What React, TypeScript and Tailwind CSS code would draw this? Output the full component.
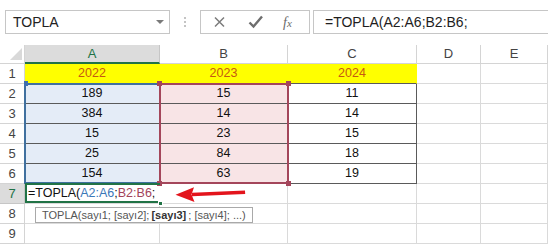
import React from "react";

const cols = ["A", "B", "C", "D", "E"];

const data = [
  ["189", "15", "11"],
  ["384", "14", "14"],
  ["15", "23", "15"],
  ["25", "84", "18"],
  ["154", "63", "19"],
];

function RowHead({ n, active }: { n: number; active?: boolean }) {
  return (
    <div
      className={
        active
          ? "flex items-center justify-center border-r border-b border-[#c6c6c6] bg-[#dcdcdc] text-[13px] text-[#217346]"
          : "flex items-center justify-center border-r border-b border-[#d4d4d4] bg-white text-[13px] text-[#444]"
      }
    >
      {n}
    </div>
  );
}

function Plain() {
  return <div className="border-r border-b border-[#dadada]" />;
}

export default function App() {
  return (
    <div className="w-[548px] h-[244px] overflow-hidden bg-white font-['Liberation_Sans',Arial,sans-serif]">
      {/* formula bar */}
      <div className="h-[45px] flex items-start pt-[10px] pl-[5px]">
        <div className="w-[165px] h-[24px] border border-[#c6c6c6] flex items-center justify-between pl-[7px] pr-[5px]">
          <span className="text-[14px] text-[#222]">TOPLA</span>
          <span className="w-0 h-0 border-l-[4px] border-r-[4px] border-t-[4px] border-l-transparent border-r-transparent border-t-[#7a7a7a]" />
        </div>
        <div className="w-[30px] h-[24px] flex flex-col items-center justify-center gap-[2px]">
          <span className="w-[2px] h-[2px] bg-[#c4c4c4]" />
          <span className="w-[2px] h-[2px] bg-[#c4c4c4]" />
          <span className="w-[2px] h-[2px] bg-[#c4c4c4]" />
        </div>
        <div className="w-[110px] h-[24px] border border-[#c6c6c6] flex items-center">
          <svg width="36" height="22" viewBox="0 0 36 22" className="ml-[2px]">
            <path d="M12 6.5 L21 15.5 M21 6.5 L12 15.5" stroke="#7c7c7c" strokeWidth="1.5" fill="none" />
          </svg>
          <svg width="36" height="22" viewBox="0 0 36 22">
            <path d="M10.5 11.5 L14.5 15.5 L23 5.5" stroke="#6e6e6e" strokeWidth="2.4" fill="none" />
          </svg>
          <span className="ml-[8px] text-[14px] italic text-[#6a6a6a] font-['Liberation_Serif',serif]">
            f<span className="text-[11px]">x</span>
          </span>
        </div>
        <div className="ml-[3px] flex-1 h-[24px] border border-r-0 border-[#c6c6c6] flex items-center pl-[11px] text-[14px] text-[#1e1e1e]">
          =TOPLA(A2:A6;B2:B6;
        </div>
      </div>

      {/* sheet */}
      <div className="grid grid-cols-[25px_135px_128px_129px_64px_67px] grid-rows-[19px_repeat(9,20px)] text-[12.5px]">
        {/* header row */}
        <div className="relative border-r border-b border-[#d4d4d4]">
          <span className="absolute right-[2px] bottom-[3px] w-0 h-0 border-l-[12px] border-l-transparent border-b-[12px] border-b-[#d9d9d9]" />
        </div>
        {cols.map((c) =>
          c === "A" ? (
            <div
              key={c}
              className="flex items-center justify-center bg-[#dcdcdc] border-r border-[#c6c6c6] border-b-2 border-b-[#217346] text-[13px] text-[#217346]"
            >
              {c}
            </div>
          ) : (
            <div
              key={c}
              className="flex items-center justify-center border-r border-b border-[#d4d4d4] text-[13px] text-[#444]"
            >
              {c}
            </div>
          )
        )}

        {/* row 1 */}
        <RowHead n={1} />
        {["2022", "2023", "2024"].map((y) => (
          <div
            key={y}
            className="flex items-center justify-center bg-[#ffff00] border-r border-r-[#ffff00] border-b border-b-[#5a5a5a] text-[#c65a11]"
          >
            {y}
          </div>
        ))}
        <Plain />
        <Plain />

        {/* rows 2-6 */}
        {data.map((r, i) => (
          <React.Fragment key={i}>
            <RowHead n={i + 2} />
            <div className="relative flex items-center justify-center bg-[#e4ecf7] border-r border-b border-[#5a5a5a] text-[#111]">
              {r[0]}
              {i === 0 && (
                <>
                  {/* A2:A6 reference range */}
                  <div className="absolute -left-px -top-px w-[137px] h-[101px] border-2 border-[#40709f] z-10 pointer-events-none" />
                  <div className="absolute -left-px -top-[3px] w-[4px] h-[5px] bg-[#3f6fb0] z-10" />
                </>
              )}
            </div>
            <div className="relative flex items-center justify-center bg-[#f8e4e6] border-r border-b border-[#5a5a5a] text-[#111]">
              {r[1]}
              {i === 0 && (
                <div className="absolute -left-px -top-px w-[130px] h-[101px] z-10 pointer-events-none">
                  <div className="absolute inset-0 border-2 border-[#a4465b]" />
                  <div className="absolute -left-[2px] -top-[2px] w-[5px] h-[5px] bg-[#a4465b]" />
                  <div className="absolute -right-[2px] -top-[2px] w-[5px] h-[5px] bg-[#a4465b]" />
                  <div className="absolute -left-[2px] -bottom-[2px] w-[5px] h-[5px] bg-[#a4465b]" />
                  <div className="absolute -right-[2px] -bottom-[2px] w-[5px] h-[5px] bg-[#a4465b]" />
                </div>
              )}
            </div>
            <div className="flex items-center justify-center bg-white border-r border-b border-[#5a5a5a] text-[#111]">
              {r[2]}
            </div>
            <Plain />
            <Plain />
          </React.Fragment>
        ))}

        {/* row 7 */}
        <RowHead n={7} active />
        <div className="relative border-b border-[#dadada] flex items-center pl-[3px] whitespace-nowrap text-[#111]">
          <span className="relative z-20">
            =TOPLA(<span className="text-[#3b78b8]">A2:A6</span>;<span className="text-[#a3435a]">B2:B6</span>;
          </span>
          <div className="absolute -top-px left-0 right-0 bottom-0 border-2 border-r-0 border-[#217346] z-[15]" />
          <div className="absolute -right-[3px] -bottom-[3px] w-[5px] h-[5px] bg-[#217346] border border-white z-[15]" />
        </div>
        <div className="relative border-r border-b border-[#dadada]">
          <svg width="80" height="20" viewBox="0 0 80 20" className="absolute left-[12px] top-0 z-20">
            <path d="M20 8.8 L73 6.5 L73.2 9.9 L20 12.3 Z" fill="#e3141c" />
            <path d="M3.5 10.8 L22 3.3 L19.5 10.5 L22.5 18.1 Z" fill="#e3141c" />
          </svg>
        </div>
        <Plain />
        <Plain />
        <Plain />

        {/* row 8 */}
        <RowHead n={8} />
        <div className="relative border-r border-b border-[#dadada]">
          <div className="absolute left-[10px] top-[3px] h-[16px] border border-[#a9a9a9] bg-white flex items-center px-[6px] whitespace-nowrap text-[11px] text-[#555] z-20">
            TOPLA(sayı1; [sayı2]; <span className="font-bold text-[#333] mx-[2px]">[sayı3]</span>; [sayı4]; ...)
          </div>
        </div>
        <Plain />
        <Plain />
        <Plain />
        <Plain />

        {/* row 9 */}
        <RowHead n={9} />
        <Plain />
        <Plain />
        <Plain />
        <Plain />
        <Plain />
      </div>
    </div>
  );
}
